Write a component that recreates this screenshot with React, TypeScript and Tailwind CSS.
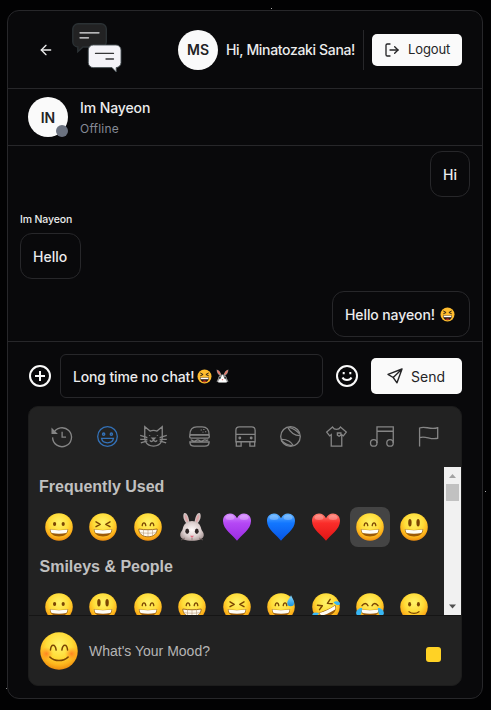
import React from "react";
import { ArrowLeft, LogOut } from "lucide-react";

type FaceKind =
  | "grin" | "squint" | "beam" | "smile" | "big" | "sweat" | "rofl" | "joy" | "slight" | "blush";

const BROWN = "#7a4503";

function Gradients() {
  return (
    <svg width="0" height="0" className="absolute">
      <defs>
        <radialGradient id="face" cx="0.5" cy="0.34" r="0.68">
          <stop offset="0" stopColor="#fff36b" />
          <stop offset="0.5" stopColor="#ffdc38" />
          <stop offset="0.78" stopColor="#fdb41c" />
          <stop offset="1" stopColor="#e9850c" />
        </radialGradient>
        <radialGradient id="cheek">
          <stop offset="0" stopColor="#ff6a1c" stopOpacity="0.75" />
          <stop offset="1" stopColor="#ff8a1c" stopOpacity="0" />
        </radialGradient>
        <linearGradient id="drop" x1="0" y1="0" x2="0" y2="1">
          <stop offset="0" stopColor="#8fdcff" />
          <stop offset="1" stopColor="#1590de" />
        </linearGradient>
        <linearGradient id="purple" x1="0" y1="0" x2="0" y2="1">
          <stop offset="0" stopColor="#d58bff" />
          <stop offset="0.35" stopColor="#b548f5" />
          <stop offset="1" stopColor="#9a2be2" />
        </linearGradient>
        <linearGradient id="blue" x1="0" y1="0" x2="0" y2="1">
          <stop offset="0" stopColor="#62b4ff" />
          <stop offset="0.35" stopColor="#1277ff" />
          <stop offset="1" stopColor="#0754e6" />
        </linearGradient>
        <linearGradient id="red" x1="0" y1="0" x2="0" y2="1">
          <stop offset="0" stopColor="#ff8072" />
          <stop offset="0.35" stopColor="#fa2d2a" />
          <stop offset="1" stopColor="#e01414" />
        </linearGradient>
        <radialGradient id="fur" cx="0.5" cy="0.45" r="0.6">
          <stop offset="0" stopColor="#fffafa" />
          <stop offset="0.6" stopColor="#dccfce" />
          <stop offset="1" stopColor="#a89695" />
        </radialGradient>
      </defs>
    </svg>
  );
}

function Arcs() {
  return (
    <path d="M8.200 12.600c.5-3.600 3-3.600 3.600 0M16.200 12.600c.6-3.600 3.100-3.600 3.600 0" fill="none" stroke={BROWN} strokeWidth="1.300" strokeLinecap="round" />
  );
}

function Squints() {
  return (
    <path d="m7 8.800 4.200 2.500L7 13.700M21 8.800l-4.200 2.500 4.200 2.400" fill="none" stroke={BROWN} strokeWidth="1.400" strokeLinecap="round" strokeLinejoin="round" />
  );
}

function Mouth() {
  return (
    <>
      <path d="M4.800 16.200c6 1 12.400 1 18.400 0 0 4.600-4 7.200-9.200 7.200s-9.200-2.600-9.200-7.200Z" fill="#9a5a08" />
      <path d="M5.400 16.600c6 .9 11.200.9 17.200 0-.2 1.900-.7 2.900-1.400 3.500-4.300.8-10.100.8-14.400 0-.7-.6-1.200-1.600-1.400-3.500Z" fill="#fffdf5" />
    </>
  );
}

function Teeth() {
  return (
    <>
      <path d="M4.800 16c6 1 12.400 1 18.400 0 0 5-4 7.800-9.200 7.800S4.800 21 4.800 16Z" fill="#fff9ed" stroke="#925506" strokeWidth=".8" />
      <path d="M5.500 19.600c5.500.8 11.500.8 17 0M9.500 17v5.500M14 17v6.500M18.500 17v5.500" fill="none" stroke="#a98a68" strokeWidth=".5" />
    </>
  );
}

function Face({ kind, size = 28 }: { kind: FaceKind; size?: number }) {
  return (
    <svg width={size} height={size} viewBox="0 0 28 28" className="block shrink-0">
      <circle cx="14" cy="14" r="13.800" fill="url(#face)" />
      {kind === "grin" && (
        <>
          <ellipse cx="9.600" cy="10.900" rx="1.600" ry="2" fill={BROWN} />
          <ellipse cx="18.200" cy="10.900" rx="1.600" ry="2" fill={BROWN} />
          <Mouth />
        </>
      )}
      {kind === "squint" && (<><Squints /><Mouth /></>)}
      {kind === "beam" && (<><Arcs /><Teeth /></>)}
      {kind === "smile" && (<><Arcs /><Mouth /></>)}
      {kind === "big" && (
        <>
          <ellipse cx="9.900" cy="9.800" rx="1.700" ry="3.700" fill={BROWN} />
          <ellipse cx="18.100" cy="9.800" rx="1.700" ry="3.700" fill={BROWN} />
          <Mouth />
        </>
      )}
      {kind === "sweat" && (
        <>
          <Arcs />
          <Mouth />
          <path d="M24 2.200c1.200 3 3.200 5 3.200 7.600a3.500 3.500 0 0 1-7 0c0-2.600 2.700-4.600 3.800-7.600Z" fill="url(#drop)" />
        </>
      )}
      {kind === "rofl" && (
        <>
          <g transform="rotate(-25 14 14)"><Squints /><Mouth /></g>
          <path d="M21.500 9.200c2.500-2 6.500-.8 6.500 1.200s-3.600 2.600-6.500-1.200Z" fill="#38b7f4" />
          <path d="M7 20c-1 3-5.500 4-6.500 2S3.500 18.500 7 20Z" fill="#38b7f4" />
        </>
      )}
      {kind === "joy" && (
        <>
          <path d="M6 12.700c2-3 4.600-3 6 0M16 12.700c1.400-3 4-3 6 0" fill="none" stroke={BROWN} strokeWidth="1.400" strokeLinecap="round" />
          <Mouth />
          <path d="M6.200 15c-3 0-6 2-6.100 5 0 3.400 4.600 3.300 5.300 0 .3-2 .4-3.500.8-5ZM21.800 15c3 0 6 2 6.100 5 0 3.400-4.600 3.300-5.300 0-.3-2-.4-3.500-.8-5Z" fill="#38b7f4" />
        </>
      )}
      {kind === "slight" && (
        <>
          <ellipse cx="9.600" cy="11.200" rx="1.500" ry="2.300" fill={BROWN} />
          <ellipse cx="18.400" cy="11.200" rx="1.500" ry="2.300" fill={BROWN} />
          <path d="M9 18.700c2.700 2.200 7.300 2.200 10 0" fill="none" stroke={BROWN} strokeWidth="1.200" strokeLinecap="round" />
        </>
      )}
      {kind === "blush" && (
        <>
          <circle cx="4.800" cy="16" r="5" fill="url(#cheek)" />
          <circle cx="23.200" cy="16" r="5" fill="url(#cheek)" />
          <path d="M7.700 13.300c.4-4.800 3.500-4.800 4.200 0M16.100 13.300c.7-4.800 3.800-4.800 4.200 0M7.300 18.500c3.700 3.400 9.700 3.400 13.400 0" fill="none" stroke={BROWN} strokeWidth="1.100" strokeLinecap="round" />
        </>
      )}
    </svg>
  );
}

function Heart({ fill }: { fill: string }) {
  return (
    <svg width="28" height="28" viewBox="0 0 28 28" className="block shrink-0">
      <path d="M14 27.800C10 22.300 0 16.500 0 8 0 3.500 3.200.6 7 .6c3 0 5.700 1.800 7 4.600C15.300 2.400 18 .6 21 .6c3.800 0 7 2.900 7 7.400 0 8.500-10 14.300-14 19.800Z" fill={fill} />
      <ellipse cx="7" cy="4.500" rx="4.500" ry="2.500" fill="#fff" opacity=".25" />
      <ellipse cx="21" cy="4.500" rx="4.500" ry="2.500" fill="#fff" opacity=".25" />
    </svg>
  );
}

function Rabbit() {
  return (
    <svg width="26" height="30" viewBox="1.500 0 25 30" className="block shrink-0">
      <path d="M9 12C6 9.500 4.200 4 6 1.300 8.500-.5 11 5 11.500 11ZM19 12c3-2.500 4.800-8 3-10.700C19.500-.5 17 5 16.500 11Z" fill="#cfc0bf" />
      <path d="M9.200 10C7.500 8 6.200 4.500 7 2.700 8.500 3 9.800 6.500 10 10ZM18.800 10c1.700-2 3-5.500 2.200-7.300-1.500.3-2.800 3.800-3 7.300Z" fill="#e0a3a6" />
      <path d="M14 9c5 0 8.500 3.200 9.300 8 .5 2 2.700 3.500 2.500 6.200-.3 3.600-5 5.600-11.800 5.600S2.500 26.800 2.200 23.200C2 20.500 4.200 19 4.700 17 5.500 12.200 9 9 14 9Z" fill="url(#fur)" />
      <ellipse cx="9.200" cy="19.200" rx="1.900" ry="2.700" fill="#2e2525" />
      <ellipse cx="18.800" cy="19.200" rx="1.900" ry="2.700" fill="#2e2525" />
      <path d="M12 23.800h4L14 26Z" fill="#e06b80" />
      <path d="M14 26v1.800M3 28l4-2M25 28l-4-2" stroke="#7a6766" strokeWidth=".7" />
    </svg>
  );
}

function FlatSquint() {
  return (
    <svg width="15" height="15" viewBox="0 0 15 15" className="block shrink-0">
      <circle cx="7.500" cy="7.500" r="7" fill="#ffbc2e" />
      <path d="m3.300 4 2.800 1.500-2.800 1.300M11.700 4 8.900 5.500l2.800 1.300" fill="none" stroke="#2b2018" strokeWidth="1" />
      <path d="M3 8.400h9c0 3-2 4.800-4.500 4.800S3 11.400 3 8.400Z" fill="#2b1a14" />
      <path d="M3.600 8.700h7.800v1.500H3.600Z" fill="#fff" />
      <path d="M5.500 12.200c1-1 3-1 4 0-1 .7-3 .7-4 0Z" fill="#e8352c" />
    </svg>
  );
}

function FlatRabbit() {
  return (
    <svg width="13" height="14" viewBox="0 0 13 14" className="block shrink-0">
      <path d="M4.800 7C2 6 .5 3 .6.400 3 .8 5 3.500 5.500 6.500ZM8.200 7c2.800-1 4.300-4 4.200-6.600C10 .8 8 3.500 7.500 6.500Z" fill="#8f8f8f" />
      <path d="M4.600 6.300C2.500 5 1.200 3 1 1 3 1.700 4.600 4 4.800 6.300ZM8.400 6.300c2.100-1.300 3.400-3.300 3.600-5.300C10 1.700 8.400 4 8.200 6.300Z" fill="#ec7a68" />
      <path d="M6.500 5.500c2.700 0 4.200 2 4.500 4.200l1.500 2.800-3 1.200h-6l-3-1.200L2 9.700c.3-2.200 1.800-4.200 4.500-4.200Z" fill="#8e8e8e" />
      <path d="M6.500 5.500c1 1.500 1 3.300 3.500 5.200l1 2.500h-9l1-2.500c2.500-1.900 2.500-3.700 3.500-5.200Z" fill="#fff" />
      <circle cx="3.900" cy="8.800" r=".9" fill="#222" />
      <circle cx="9.100" cy="8.800" r=".9" fill="#222" />
      <path d="M5.600 10.300h1.800l-.9 1.100Z" fill="#ee4d4d" />
    </svg>
  );
}

function Logo() {
  return (
    <svg width="51" height="51" viewBox="0 0 51 51" className="block shrink-0">
      <path d="M6.500.8h22.500a5.300 5.300 0 0 1 5.300 5.300v12.600a5.300 5.300 0 0 1-5.300 5.300H11l-5.200 4.700V24C3 23.800.8 21.500.8 18.700V6.100A5.300 5.300 0 0 1 6.500.8Z" fill="#222223" stroke="#2b3134" strokeWidth="1.400" />
      <path d="M21.300 22H44a5 5 0 0 1 5 5v12.600a5 5 0 0 1-4.800 5V49L40 44.600H21.300a5 5 0 0 1-5-5V27a5 5 0 0 1 5-5Z" fill="#f4f3f8" stroke="#4a5257" strokeWidth=".9" />
      <path d="M8 9.800h19M8 14.800h8.500" stroke="#e8e8ea" strokeWidth="1.300" strokeLinecap="round" />
      <path d="M23.500 30.400h18M34 36h7.500" stroke="#363638" strokeWidth="1.300" strokeLinecap="round" />
    </svg>
  );
}

const NAV: { name: string; art: React.ReactNode }[] = [
  {
    name: "recent",
    art: (
      <>
        <path d="M2.700 8.500A10.800 10.800 0 1 1 1.800 13" />
        <path d="M1.300 3.500v4.800h4.800Z" fill="currentColor" />
        <path d="M12.700 6.500v6.300h4.500" />
      </>
    ),
  },
  {
    name: "people",
    art: (
      <>
        <circle cx="12" cy="12" r="11.200" />
        <circle cx="7.600" cy="9.300" r="1.300" />
        <circle cx="16.400" cy="9.300" r="1.300" />
        <path d="M5.200 14.200h13.600c-.6 3.300-3.300 5-6.800 5s-6.200-1.700-6.800-5Z" />
      </>
    ),
  },
  {
    name: "nature",
    art: (
      <>
        <path d="M2.700 17.500C1.800 15.500 2 13 2 10.500V.8l6 5c2.500-1 5.500-1 8 0l6-5v9.700c0 2.500.2 5-.7 7-1.700 3.500-5 5.500-9.300 5.500s-7.600-2-9.300-5.500Z" />
        <path d="M-3.200 10.800 5 13.300M-3.200 15.200H5M-2.500 19.400 5 17M27.200 10.800 19 13.300M27.200 15.200H19M26.500 19.400 19 17" />
        <path d="M7.500 10.500v1M16.500 10.500v1M10.500 14h3L12 15.500ZM7.800 16.500c1.500 2 3.500 1.300 4.200-1 .7 2.300 2.700 3 4.200 1" />
      </>
    ),
  },
  {
    name: "food",
    art: (
      <>
        <path d="M1 10.200C1 4 4.500 1 9 1h6c4.500 0 8 3 8 9.200Z" />
        <rect x=".8" y="10.200" width="22.400" height="3.600" rx="1.600" />
        <path d="M2 15.800c2 0 2 1.500 4 1.500s2-1.500 4-1.500 2 1.500 4 1.500 2-1.500 4-1.500 2 1.500 4 0M1 18.300h22c0 3-2 4.800-5 4.800H6c-3 0-5-1.800-5-4.800Z" />
        <path d="M14 4v1M17 3.500v1M16 6.500v1M19 6v1" />
      </>
    ),
  },
  {
    name: "places",
    art: (
      <>
        <path d="M1 18V5c0-2.500 1-4 4-4h14c3 0 4 1.500 4 4v13ZM1 9.500h22M1.500 18v5H7v-5M17 18v5h5.500v-5" />
        <circle cx="5.500" cy="13.700" r=".9" />
        <circle cx="18.500" cy="13.700" r=".9" />
      </>
    ),
  },
  {
    name: "activity",
    art: (
      <>
        <circle cx="12" cy="12" r="11.200" />
        <path d="M8.800 1.500c3 6 8 9.500 14 9.500M10.500 1.500c5 1.500 9 4 11.500 7.200M1.200 15.200c6-.2 11.500 2.500 14 7.200M1.800 16.800c3.500 3.500 7.500 5.200 12 5.700" />
      </>
    ),
  },
  {
    name: "objects",
    art: (
      <path d="M7.500 1.200.8 7l3.400 4.300 1.800-1.500V23h12V9.800l1.800 1.500L23.200 7l-6.700-5.800c-2 3.500-7 3.500-9 0ZM13 8h4v2.500l-2 1.200-2-1.200Z" />
    ),
  },
  {
    name: "symbols",
    art: (
      <>
        <circle cx="2" cy="19.300" r="3.700" />
        <circle cx="20.600" cy="19.300" r="3.700" />
        <path d="M5.700 19.300V1h18.600v18.300M5.700 6h18.600" />
      </>
    ),
  },
  {
    name: "flags",
    art: <path d="M1.800 23.500V2.300C8-.5 13 4.500 22.500 2v12C14 16.500 9 10.500 1.800 13.300" />,
  },
];

const FREQUENT: { art: React.ReactNode; active?: boolean }[] = [
  { art: <Face kind="grin" /> },
  { art: <Face kind="squint" /> },
  { art: <Face kind="beam" /> },
  { art: <Rabbit /> },
  { art: <Heart fill="url(#purple)" /> },
  { art: <Heart fill="url(#blue)" /> },
  { art: <Heart fill="url(#red)" /> },
  { art: <Face kind="smile" />, active: true },
  { art: <Face kind="big" /> },
];

const PEOPLE: FaceKind[] = ["grin", "big", "smile", "beam", "squint", "sweat", "rofl", "joy", "slight"];

function EmojiPicker() {
  return (
    <section className="mx-5 mt-2 flex h-[280px] flex-col overflow-hidden rounded-[10px] border border-[#1c1c1c] bg-[#222222] font-['Liberation_Sans',Arial,sans-serif]">
      <nav className="flex h-[60px] shrink-0 items-center px-[10px] pb-px">
        {NAV.map((item) => (
          <span key={item.name} className={`flex flex-1 justify-center ${item.name === "people" ? "text-[#3371b7]" : "text-[#858585]"}`}>
            <svg width="21" height="21" viewBox="0 0 24 24" fill="none" stroke="currentColor" strokeWidth="1.500" className="overflow-visible">
              {item.art}
            </svg>
          </span>
        ))}
      </nav>
      <div className="flex h-[148px] shrink-0">
        <div className="w-[415px] overflow-hidden pl-[7.700px]">
          <h2 className="flex h-10 items-center pl-[2.300px] text-[16px] font-bold leading-none text-[#c0c0c0]">Frequently Used</h2>
          <div className="flex w-[400px]">
            {FREQUENT.map((e, i) => (
              <span key={i} className="flex h-10 flex-1 justify-center">
                <span className={`flex size-10 shrink-0 items-center justify-center rounded-lg ${e.active ? "bg-[#444444]" : ""}`}>{e.art}</span>
              </span>
            ))}
          </div>
          <h2 className="flex h-10 items-center pl-[2.800px] text-[16px] font-bold leading-none text-[#c0c0c0]">Smileys &amp; People</h2>
          <div className="flex w-[400px]">
            {PEOPLE.map((kind) => (
              <span key={kind} className="flex h-10 flex-1 items-center justify-center">
                <Face kind={kind} />
              </span>
            ))}
          </div>
        </div>
        <div className="flex w-[17px] flex-col items-center justify-between bg-[#f1f1f1]">
          <div className="flex flex-col items-center">
            <svg width="17" height="17" viewBox="0 0 17 17"><path d="M5 11h7L8.500 7Z" fill="#a3a3a3" /></svg>
            <div className="h-[17px] w-[13px] bg-[#c1c1c1]" />
          </div>
          <svg width="17" height="17" viewBox="0 0 17 17"><path d="M5 6.500h7l-3.500 4Z" fill="#505050" /></svg>
        </div>
      </div>
      <footer className="flex h-[70px] shrink-0 items-center border-t border-[#151515] pl-[11px] pr-5">
        <Face kind="blush" size={38} />
        <span className="ml-[11px] mt-px text-[14px] leading-none text-[#b5b5b5]">What's Your Mood?</span>
        <span className="ml-auto mt-[7px] size-[15px] rounded-[3px] bg-[#ffd225]" />
      </footer>
    </section>
  );
}

export default function App() {
  return (
    <div className="relative h-[710px] w-[491px] overflow-hidden bg-[#020203] pl-[7px] pt-[10px] font-['Inter',sans-serif] text-[#ececed]">
      <Gradients />
      <i className="absolute left-[271px] top-2 size-px bg-[#aaa]" />
      <i className="absolute left-[485px] top-[491px] size-px bg-[#aaa]" />
      <i className="absolute left-[6px] top-[688px] size-px bg-[#888]" />
      <main className="flex h-[689px] w-[476px] flex-col rounded-xl border border-[#27272a] bg-[#09090b]">
        <header className="flex h-[78px] shrink-0 items-center border-b border-[#27272a] pl-[30px] pr-5">
          <ArrowLeft size={16} strokeWidth={2} className="shrink-0" />
          <span className="-mt-[3px] ml-[18px]"><Logo /></span>
          <span className="ml-[55px] flex size-10 shrink-0 items-center justify-center rounded-full bg-[#fafafa] text-[14px] font-semibold text-[#222224]">MS</span>
          <span className="ml-2 w-[137px] whitespace-nowrap text-[14px] font-medium tracking-[-0.340px]">Hi, Minatozaki Sana!</span>
          <span className="mr-2 h-10 w-px shrink-0 bg-[#27272a]" />
          <button className="flex h-8 w-[90px] shrink-0 items-center rounded-[5px] bg-[#fafafa] pl-3 text-[13px] text-[#242426]">
            <LogOut size={16} strokeWidth={2} />
            <span className="ml-2 tracking-[-0.100px]">Logout</span>
          </button>
        </header>
        <section className="flex h-[57px] shrink-0 items-center border-b border-[#27272a] pl-5">
          <span className="relative flex size-10 items-center justify-center rounded-full bg-[#fafafa] text-[14px] font-semibold text-[#222224]">
            IN
            <i className="absolute bottom-0 right-0 size-3 rounded-full bg-[#6b7280]" />
          </span>
          <span className="ml-3 mt-[2px] flex flex-col">
            <span className="text-[14px] font-medium leading-5 tracking-[-0.100px]">Im Nayeon</span>
            <span className="mt-px text-[12px] leading-5 tracking-[0.200px] text-[#858a95]">Offline</span>
          </span>
        </section>
        <section className="flex h-[196px] shrink-0 flex-col border-b border-[#27272a] px-3 pt-[5px] text-[14px] font-medium">
          <div className="flex h-[46px] w-10 shrink-0 items-center justify-center self-end rounded-xl border border-[#27272a]">Hi</div>
          <span className="mt-[15px] text-[10.500px] leading-4 tracking-[-0.150px]">Im Nayeon</span>
          <div className="mt-[5px] flex h-[46px] w-[61px] shrink-0 items-center self-start rounded-xl border border-[#27272a] pl-3">Hello</div>
          <div className="mt-3 flex h-[46px] w-[138px] shrink-0 items-center self-end rounded-xl border border-[#27272a] pl-3">
            <span className="w-[95px] whitespace-nowrap tracking-[-0.100px]">Hello nayeon!</span>
            <FlatSquint />
          </div>
        </section>
        <div className="mt-3 flex h-11 shrink-0 items-center pl-[21px] pr-5">
          <svg width="22" height="22" viewBox="0 0 22 22" fill="none" stroke="#fafafa" strokeWidth="2" className="shrink-0">
            <circle cx="11" cy="11" r="10" />
            <path d="M11 6v10M6 11h10" />
          </svg>
          <div className="ml-[9px] flex h-11 w-[263px] items-center rounded-md border border-[#27272a] pl-3 text-[14px] font-medium">
            <span className="w-[124px] whitespace-nowrap tracking-[-0.150px]">Long time no chat!</span>
            <FlatSquint />
            <span className="ml-1"><FlatRabbit /></span>
          </div>
          <svg width="22" height="22" viewBox="0 0 22 22" fill="none" stroke="#fafafa" strokeWidth="2" className="ml-[13px] shrink-0">
            <circle cx="11" cy="11" r="10" />
            <path d="M6.500 12.500c1.500 3.300 7.500 3.300 9 0" />
            <path d="M7.700 7v2.200M14.300 7v2.200" />
          </svg>
          <button className="ml-[13px] flex h-9 w-[91px] shrink-0 items-center rounded-[5px] bg-[#fafafa] pl-[15px] text-[14px] text-[#242426]">
            <svg width="18" height="18" viewBox="0 0 18 18" fill="none" stroke="currentColor" strokeWidth="1.400" strokeLinejoin="round">
              <path d="m16 2-14 5.300 5.200 3.200 3.800 5.300ZM15.800 2.200 7.200 10.500" />
            </svg>
            <span className="ml-[7px]">Send</span>
          </button>
        </div>
        <EmojiPicker />
      </main>
    </div>
  );
}
